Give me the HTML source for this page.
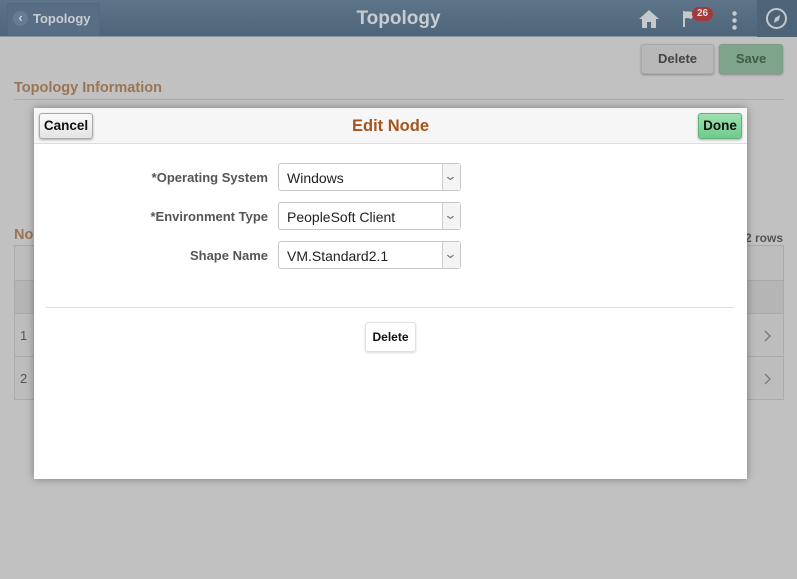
<!DOCTYPE html>
<html><head><style>
*{box-sizing:border-box;margin:0;padding:0}
body{width:797px;height:579px;overflow:hidden;font-family:"Liberation Sans",Arial,sans-serif;background:#c1c1c1;position:relative}
.a{position:absolute}
.hdr{left:0;top:0;width:797px;height:37px;background:linear-gradient(#5d7489,#4e6579);border-bottom:1px solid #8a96a0}
.btn{position:absolute;border:1px solid #a9a9a9;border-radius:3px;font-weight:bold;font-size:13px;text-align:center;box-shadow:0 1px 2px rgba(0,0,0,.3)}
.sel{position:absolute;left:278px;width:183px;height:28px;border:1px solid #c6c6c6;border-radius:3px;background:#fff;font-size:14px;color:#222;padding:6px 0 0 8px}
.sel:after{content:"";position:absolute;right:0;top:0;width:17px;height:26px;border-left:1px solid #d0d0d0;background:#f4f4f4}
.sel span{position:absolute;right:4px;top:4px;font-size:13px;color:#777;z-index:2;transform:scaleX(1.3)}
.lbl{position:absolute;width:268px;text-align:right;left:0;font-size:13px;font-weight:bold;color:#555}
</style></head><body>
<div class="a hdr"></div>
<div class="a" style="left:7px;top:3px;width:93px;height:33px;border:1px solid #56697c;border-radius:2px;background:#586e84"></div>
<div class="a" style="left:13px;top:11px;width:15px;height:15px;border-radius:50%;background:#667c92;color:#ccd;font-size:13px;text-align:center;line-height:14px;font-weight:bold">‹</div>
<div class="a" style="left:33px;top:11px;color:#c9ced4;font-weight:bold;font-size:13px">Topology</div>
<div class="a" style="left:0;width:797px;top:8px;text-align:center;color:#c7ccd2;font-weight:bold;font-size:19px">Topology</div>
<svg class="a" style="left:638px;top:9px" width="22" height="20" viewBox="0 0 22 20"><path d="M11 1 L1 10 L4 10 L4 19 L9 19 L9 13 L13 13 L13 19 L18 19 L18 10 L21 10 Z" fill="#c4c9ce"/></svg>
<svg class="a" style="left:682px;top:10px" width="16" height="18"><path d="M2 1 L2 17" stroke="#c4c9ce" stroke-width="2"/><path d="M2 2 Q8 0 14 4 L9 9 Q5 7 2 9Z" fill="#c4c9ce"/></svg>
<div class="a" style="left:692px;top:7px;width:21px;height:14px;border-radius:7px;background:#a3393b;color:#ddd;font-size:10px;font-weight:bold;text-align:center;line-height:14px">26</div>
<div class="a" style="left:732px;top:10px;width:5px;height:20px;background:radial-gradient(circle,#c4c9ce 2px,transparent 2.5px) 0 0/5px 7px"></div>
<div class="a" style="left:757px;top:0;width:40px;height:37px;background:#4d6378"></div>
<div class="a" style="left:766px;top:8px;width:21px;height:21px;border:2px solid #c4c9ce;border-radius:50%"></div>
<svg class="a" style="left:772px;top:14px" width="10" height="10"><path d="M8 1 L3 4 L2 9 L7 6Z" fill="#c4c9ce"/></svg>
<div class="btn" style="left:641px;top:44px;width:73px;height:30px;background:#b8b8b8;color:#444;line-height:28px">Delete</div>
<div class="btn" style="left:719px;top:44px;width:64px;height:30px;background:#7fa48c;border-color:#7a9e86;color:#3e5a47;line-height:28px">Save</div>
<div class="a" style="left:14px;top:80px;color:#9a7453;font-weight:bold;font-size:14.5px">Topology Information</div>
<div class="a" style="left:14px;top:99px;width:770px;height:1px;background:#adadad"></div>
<div class="a" style="left:14px;top:227px;color:#9a7453;font-weight:bold;font-size:14.5px">No</div>
<div class="a" style="left:745px;top:231px;color:#555;font-weight:bold;font-size:12px">2 rows</div>
<div class="a" style="left:14px;top:245px;width:770px;height:155px;border:1px solid #aaa;background:#bdbdbd"></div>
<div class="a" style="left:14px;top:280px;width:770px;height:1px;background:#aaa"></div>
<div class="a" style="left:14px;top:313px;width:770px;height:1px;background:#aaa"></div>
<div class="a" style="left:14px;top:356px;width:770px;height:1px;background:#aaa"></div>
<div class="a" style="left:15px;top:281px;width:768px;height:32px;background:#b5b5b5"></div>
<div class="a" style="left:20px;top:328px;color:#555;font-size:13px">1</div>
<div class="a" style="left:20px;top:371px;color:#555;font-size:13px">2</div>
<svg class="a" style="left:764px;top:330px" width="8" height="12"><path d="M1 1 L6 6 L1 11" stroke="#777" stroke-width="1.3" fill="none"/></svg>
<svg class="a" style="left:764px;top:373px" width="8" height="12"><path d="M1 1 L6 6 L1 11" stroke="#777" stroke-width="1.3" fill="none"/></svg>
<div class="a" style="left:34px;top:108px;width:713px;height:371px;background:#fff;box-shadow:0 0 8px rgba(0,0,0,.35)">
  <div class="a" style="left:0;top:0;width:713px;height:36px;background:#f6f6f6;border-bottom:1px solid #ddd"></div>
  <div class="btn" style="left:5px;top:5px;width:54px;height:26px;background:linear-gradient(#fafafa,#e4e4e4);color:#111;line-height:24px;font-size:13.5px">Cancel</div>
  <div class="a" style="left:0;width:713px;top:9px;text-align:center;color:#a6541f;font-weight:bold;font-size:16.5px">Edit Node</div>
  <div class="btn" style="left:664px;top:5px;width:44px;height:26px;background:linear-gradient(#9de0b0,#6fcb8d);border-color:#63b37e;color:#111;line-height:24px;font-size:13.5px">Done</div>
  <div class="a" style="left:12px;top:199px;width:688px;height:1px;background:#ddd"></div>
  <div class="btn" style="left:331px;top:214px;width:51px;height:30px;background:#fff;border-color:#e0e0e0;color:#111;line-height:28px;font-size:12px;box-shadow:0 1px 2px rgba(0,0,0,.15)">Delete</div>
</div>
<div class="lbl" style="top:170px">*Operating System</div>
<div class="lbl" style="top:209px">*Environment Type</div>
<div class="lbl" style="top:248px">Shape Name</div>
<div class="sel" style="top:163px">Windows<span>⌄</span></div>
<div class="sel" style="top:202px">PeopleSoft Client<span>⌄</span></div>
<div class="sel" style="top:241px">VM.Standard2.1<span>⌄</span></div>
</body></html>
